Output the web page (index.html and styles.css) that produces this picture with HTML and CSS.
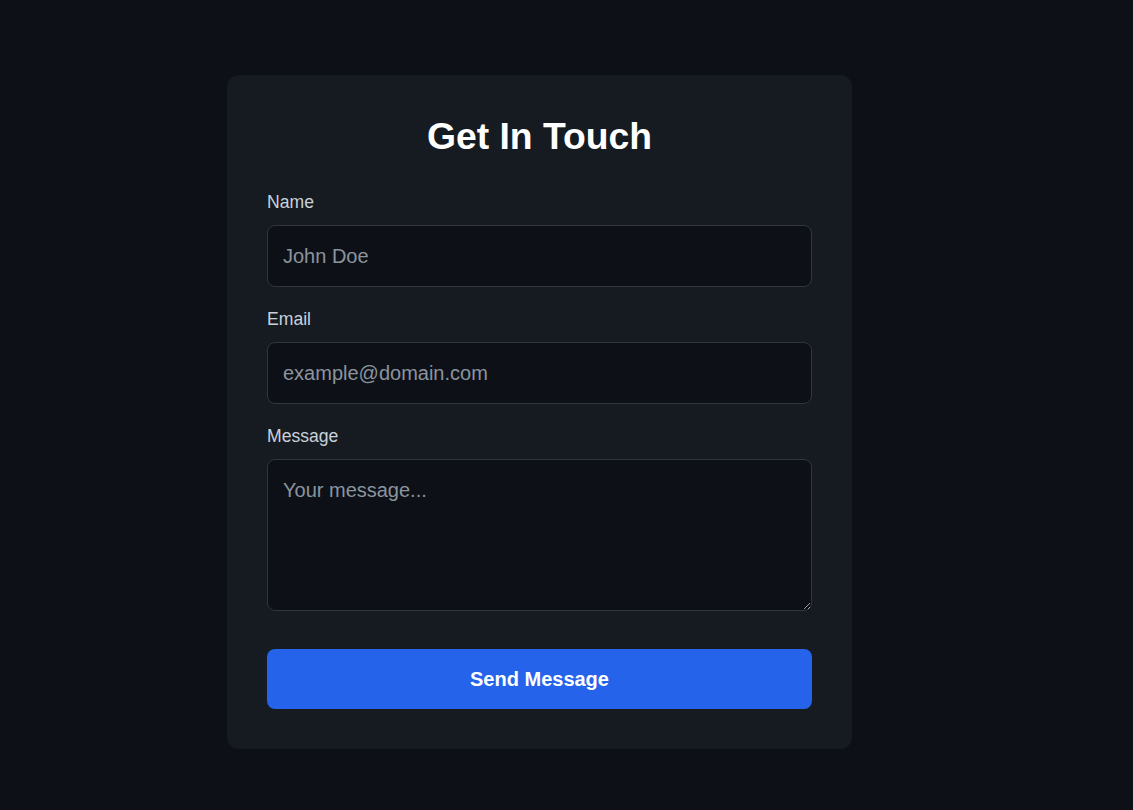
FILE: index.html
```html
<!DOCTYPE html>
<html lang="en">
<head>
<meta charset="utf-8">
<title>Get In Touch</title>
<link rel="stylesheet" href="styles.css">
</head>
<body>
<main class="page">
  <form class="card">
    <h2 class="title">Get In Touch</h2>
    <div class="group">
      <label class="label" for="name">Name</label>
      <input class="field" id="name" type="text" placeholder="John Doe">
    </div>
    <div class="group">
      <label class="label" for="email">Email</label>
      <input class="field" id="email" type="email" placeholder="example@domain.com">
    </div>
    <div class="group">
      <label class="label" for="message">Message</label>
      <textarea class="field area" id="message" placeholder="Your message..."></textarea>
    </div>
    <button class="send" type="button">Send Message</button>
  </form>
</main>
</body>
</html>
```
FILE: styles.css
```css
* { box-sizing: border-box; }
html, body { margin: 0; padding: 0; }
body {
  background: #0d1117;
  font-family: "Liberation Sans", Arial, sans-serif;
  color: #c9d1d9;
  min-height: 810px;
}
.page {
  padding: 75px 0 0 227px;
}
.card {
  width: 625px;
  background: #161b22;
  border-radius: 12px;
  padding: 40px;
  display: flex;
  flex-direction: column;
}
.title {
  margin: 0 0 33px;
  font-size: 37.3px;
  line-height: 42px;
  font-weight: 700;
  color: #ffffff;
  text-align: center;
}
.group {
  display: flex;
  flex-direction: column;
  margin-bottom: 20px;
}
.label {
  font-size: 17.6px;
  line-height: 24px;
  margin-bottom: 11px;
  color: #c9d1d9;
}
.field {
  width: 100%;
  height: 62px;
  background: #0d1117;
  border: 1px solid #30363d;
  border-radius: 8px;
  padding: 18px 15px;
  font-family: "Liberation Sans", Arial, sans-serif;
  font-size: 20px;
  line-height: 24px;
  color: #c9d1d9;
  outline: none;
  margin: 0;
}
.field::placeholder { color: #8b949e; opacity: 1; }
.area {
  height: 152px;
  resize: vertical;
  display: block;
}
.send {
  margin-top: 18px;
  height: 60px;
  width: 100%;
  border: none;
  border-radius: 8px;
  background: #2563eb;
  color: #ffffff;
  font-family: "Liberation Sans", Arial, sans-serif;
  font-size: 20px;
  font-weight: 700;
  cursor: pointer;
}
```
